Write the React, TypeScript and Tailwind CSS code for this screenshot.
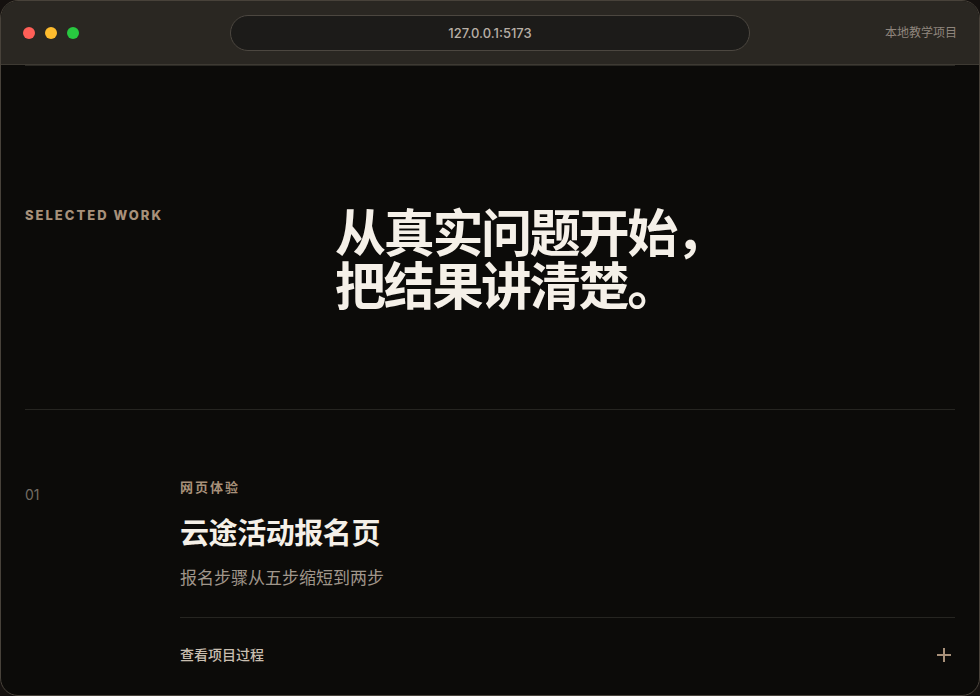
type Project = {
  id: string;
  category: string;
  title: string;
  summary: string;
};

const projects: Project[] = [
  { id: '01', category: '网页体验', title: '云途活动报名页', summary: '报名步骤从五步缩短到两步' }
];

const PlusIcon = () => (
  <svg className="size-3.5 text-[#a8917a]" viewBox="0 0 14 14" fill="none" stroke="currentColor" strokeWidth="2" aria-hidden="true">
    <path d="M7 0v14M0 7h14" />
  </svg>
);

const BrowserBar = () => (
  <header className="grid grid-cols-[1fr_minmax(0,520px)_1fr] items-center border-b border-[#3e3a33] bg-[#2a2722] px-[22px] pt-3.5 pb-[13px]">
    <div className="flex gap-2.5">
      <span className="size-3 rounded-full bg-[#ff5f57]" />
      <span className="size-3 rounded-full bg-[#febc2e]" />
      <span className="size-3 rounded-full bg-[#28c840]" />
    </div>
    <div className="flex h-9 items-center justify-center rounded-full border border-[#4c4740] bg-[#1c1b19] pt-px text-[13px] font-medium text-[#b8afa6]">
      127.0.0.1:5173
    </div>
    <p className="text-right text-xs text-[#8f857d]">本地教学项目</p>
  </header>
);

const ProjectItem = ({ project }: { project: Project }) => (
  <article className="grid grid-cols-[1fr_5fr] border-t border-[#262521] pt-[67px]">
    <span className="pt-2 text-sm leading-5 text-[#736b64]">{project.id}</span>
    <div>
      <p className="text-[13px] leading-5 font-bold tracking-[2px] text-[#a8917a]">{project.category}</p>
      <h3 className="mt-[19px] text-[29px] leading-9 font-bold tracking-[-0.015em] text-[#f5f0e8]">{project.title}</h3>
      <p className="mt-3 text-[17px] leading-7 text-[#a0968b]">{project.summary}</p>
      <button
        type="button"
        className="mt-[25px] flex h-[75px] w-full items-center justify-between border-t border-[#262521] pr-1 text-left text-sm font-medium text-[#c9beb0]"
      >
        <span>查看项目过程</span>
        <PlusIcon />
      </button>
    </div>
  </article>
);

export default function App() {
  return (
    <div lang="zh-CN" className="h-screen bg-[#15110f] font-[Inter,'Noto_Sans_CJK_SC',sans-serif]">
      <div className="flex h-full flex-col overflow-hidden rounded-[18px] border border-[#48423a] bg-[#0c0b09]">
        <BrowserBar />
        <main className="min-h-0 flex-1 overflow-hidden px-6">
          <section className="border-t border-[#2b2924]">
            <div className="grid grid-cols-[1fr_2fr] pt-[141px] pb-24">
              <p className="text-[13px] leading-4 font-extrabold tracking-[2px] text-[#a8917a]">SELECTED WORK</p>
              <h2 className="text-[51px] leading-[53px] font-bold tracking-[-0.045em] text-[#f5f0e8]">
                从真实问题开始，
                <br />
                把结果讲清楚。
              </h2>
            </div>
            {projects.map((project) => (
              <ProjectItem key={project.id} project={project} />
            ))}
          </section>
        </main>
      </div>
    </div>
  );
}
